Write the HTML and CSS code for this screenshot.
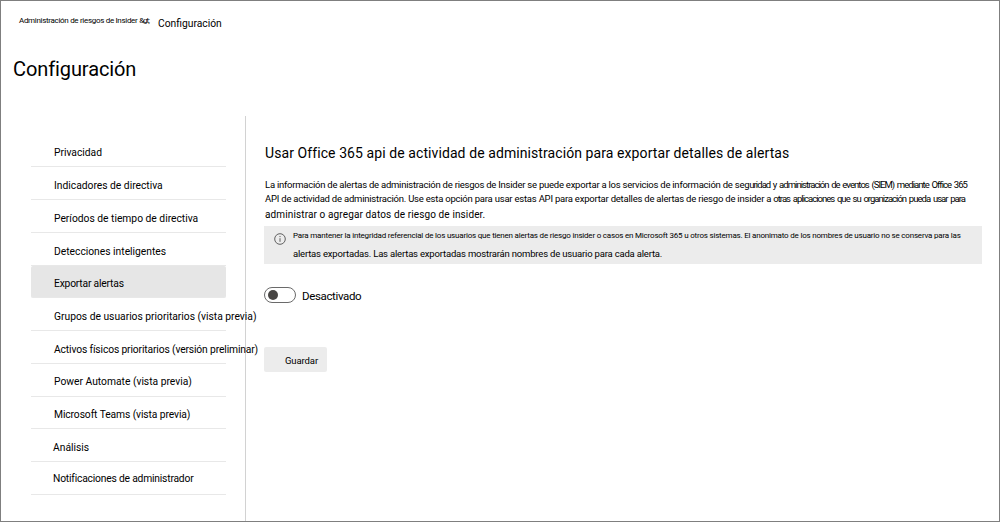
FILE: index.html
```
<!DOCTYPE html>
<html lang="es">
<head>
<meta charset="utf-8">
<title>Configuración</title>
<link rel="stylesheet" href="styles.css">
</head>
<body>
<div class="page">
  <header class="breadcrumb"><span class="crumb-parent">Administración de riesgos de Insider <span class="crumb-sep">&amp;gt;</span></span><span class="crumb-current">Configuración</span></header>
  <h1 class="title">Configuración</h1>
  <div class="columns">
    <nav class="nav">
      <a class="item raised">Privacidad</a>
      <a class="item">Indicadores de directiva</a>
      <a class="item">Períodos de tiempo de directiva</a>
      <a class="item">Detecciones inteligentes</a>
      <a class="item active tight">Exportar alertas</a>
      <a class="item">Grupos de usuarios prioritarios (vista previa)</a>
      <a class="item snug">Activos físicos prioritarios (versión preliminar)</a>
      <a class="item raised">Power Automate (vista previa)</a>
      <a class="item raised snug">Microsoft Teams (vista previa)</a>
      <a class="item outdent">Análisis</a>
      <a class="item outdent last tight">Notificaciones de administrador</a>
    </nav>
    <main class="content">
      <h2 class="heading">Usar Office 365 api de actividad de administración para exportar detalles de alertas</h2>
      <div class="description">
        <div class="line"><span class="d1">La información de alertas de administración de riesgos de Insider se puede exportar a los servicios de información de seg</span><span class="d2">uridad y administración de eventos (SIEM) mediante Office 365</span></div>
        <div class="line"><span class="d3">API de actividad de administración. Use esta opción para usar estas API para exportar detalles de alertas de riesgo de insider </span><span class="d4">a otras aplicaciones que su organización pueda usar para</span></div>
        <div class="line third">administrar o agregar datos de riesgo de insider.</div>
      </div>
      <div class="notice">
        <svg class="info" viewBox="0 0 12 12" width="12" height="12"><circle cx="6" cy="6" r="5.3" fill="none" stroke="#606060" stroke-width="1"/><path d="M6 5.2v3.6M6 3v1.1" stroke="#606060" stroke-width="1"/></svg>
        <div class="notice-text">
          <div class="note-a">Para mantener la integridad referencial de los usuarios que tienen alertas de riesgo insider o casos en Microsoft 365 u otros sistemas. El anonimato de los nombres de usuario no se conserva para las</div>
          <div class="note-b">alertas exportadas. Las alertas exportadas mostrarán nombres de usuario para cada alerta.</div>
        </div>
      </div>
      <div class="switch-row"><span class="switch"><span class="knob"></span></span><span class="switch-label">Desactivado</span></div>
      <button class="save">Guardar</button>
    </main>
  </div>
</div>
</body>
</html>
```
FILE: styles.css
```
* { box-sizing: border-box; }
body { margin: 0; background: #fff; color: #000; font-family: Roboto, "Liberation Sans", sans-serif; font-size: 10.3px; }
.page { width: 1000px; height: 522px; border: 1px solid #7f7f7f; overflow: hidden; white-space: nowrap; }
.breadcrumb { display: flex; height: 44px; padding-left: 18px; line-height: 12px; }
.crumb-parent { width: 139px; padding-top: 14px; font-size: 8px; letter-spacing: -0.31px; }
.crumb-sep { letter-spacing: -1px; }
.crumb-current { padding-top: 17px; }
.title { margin: 0; height: 71px; padding: 12px 0 0 12px; font-size: 20px; line-height: 24px; font-weight: 400; letter-spacing: -0.1px; }
.columns { display: flex; height: 405px; }
.nav { position: relative; z-index: 1; width: 245px; flex: none; border-right: 1px solid #d2d2d2; padding: 18.5px 0 0 30px; }
.item { display: block; width: 195px; height: 32.75px; padding: 12px 0 0 23px; line-height: 14px; border-bottom: 1px solid #e8e8e8; letter-spacing: -0.01px; }
.item.active { background: #e6e6e6; border-radius: 2px; padding-top: 11.5px; }
.item.raised { padding-top: 11.4px; }
.item.outdent { padding-left: 22px; }
.item.last { padding-top: 10px; }
.item.snug { letter-spacing: -0.14px; }
.item.raised.snug { letter-spacing: -0.1px; }
.item.tight { letter-spacing: -0.2px; }
.content { padding: 27px 0 0 19px; width: 737px; }
.heading { margin: 0; font-size: 14px; line-height: 20px; font-weight: 400; letter-spacing: 0.085px; }
.description { padding-top: 15px; font-size: 9.5px; }
.line { height: 14px; line-height: 14px; }
.line.third { height: 20px; padding-top: 2px; font-size: 10px; letter-spacing: 0.12px; }
.d1 { letter-spacing: -0.24px; }
.d2 { letter-spacing: -0.95px; word-spacing: 1.2px; }
.d3 { letter-spacing: -0.22px; }
.d4 { letter-spacing: -0.98px; word-spacing: 1.4px; }
.notice { display: flex; margin-left: -1px; width: 718px; height: 38px; background: #ececec; padding-left: 10px; }
.info { margin-top: 7px; flex: none; }
.notice-text { padding-left: 7px; }
.note-a { font-size: 8px; line-height: 12px; padding-top: 4px; letter-spacing: -0.197px; }
.note-b { font-size: 9.5px; line-height: 12px; padding-top: 6px; letter-spacing: -0.19px; }
.switch-row { display: flex; align-items: center; height: 16px; margin: 23px 0 0 -1px; font-size: 11.5px; letter-spacing: -0.36px; }
.switch { width: 32px; height: 16px; border: 1px solid #6a6a6a; border-radius: 8px; padding: 2px 3px; }
.knob { display: block; width: 10px; height: 10px; border-radius: 50%; background: #484644; }
.switch-label { padding: 1px 0 0 6px; }
.save { display: block; margin: 44px 0 0 -1px; width: 63px; height: 25px; padding: 1px 0 0 21px; border: 0; border-radius: 2px; background: #ececec; color: #000; font: 9.5px Roboto, sans-serif; letter-spacing: -0.1px; text-align: left; }
```
